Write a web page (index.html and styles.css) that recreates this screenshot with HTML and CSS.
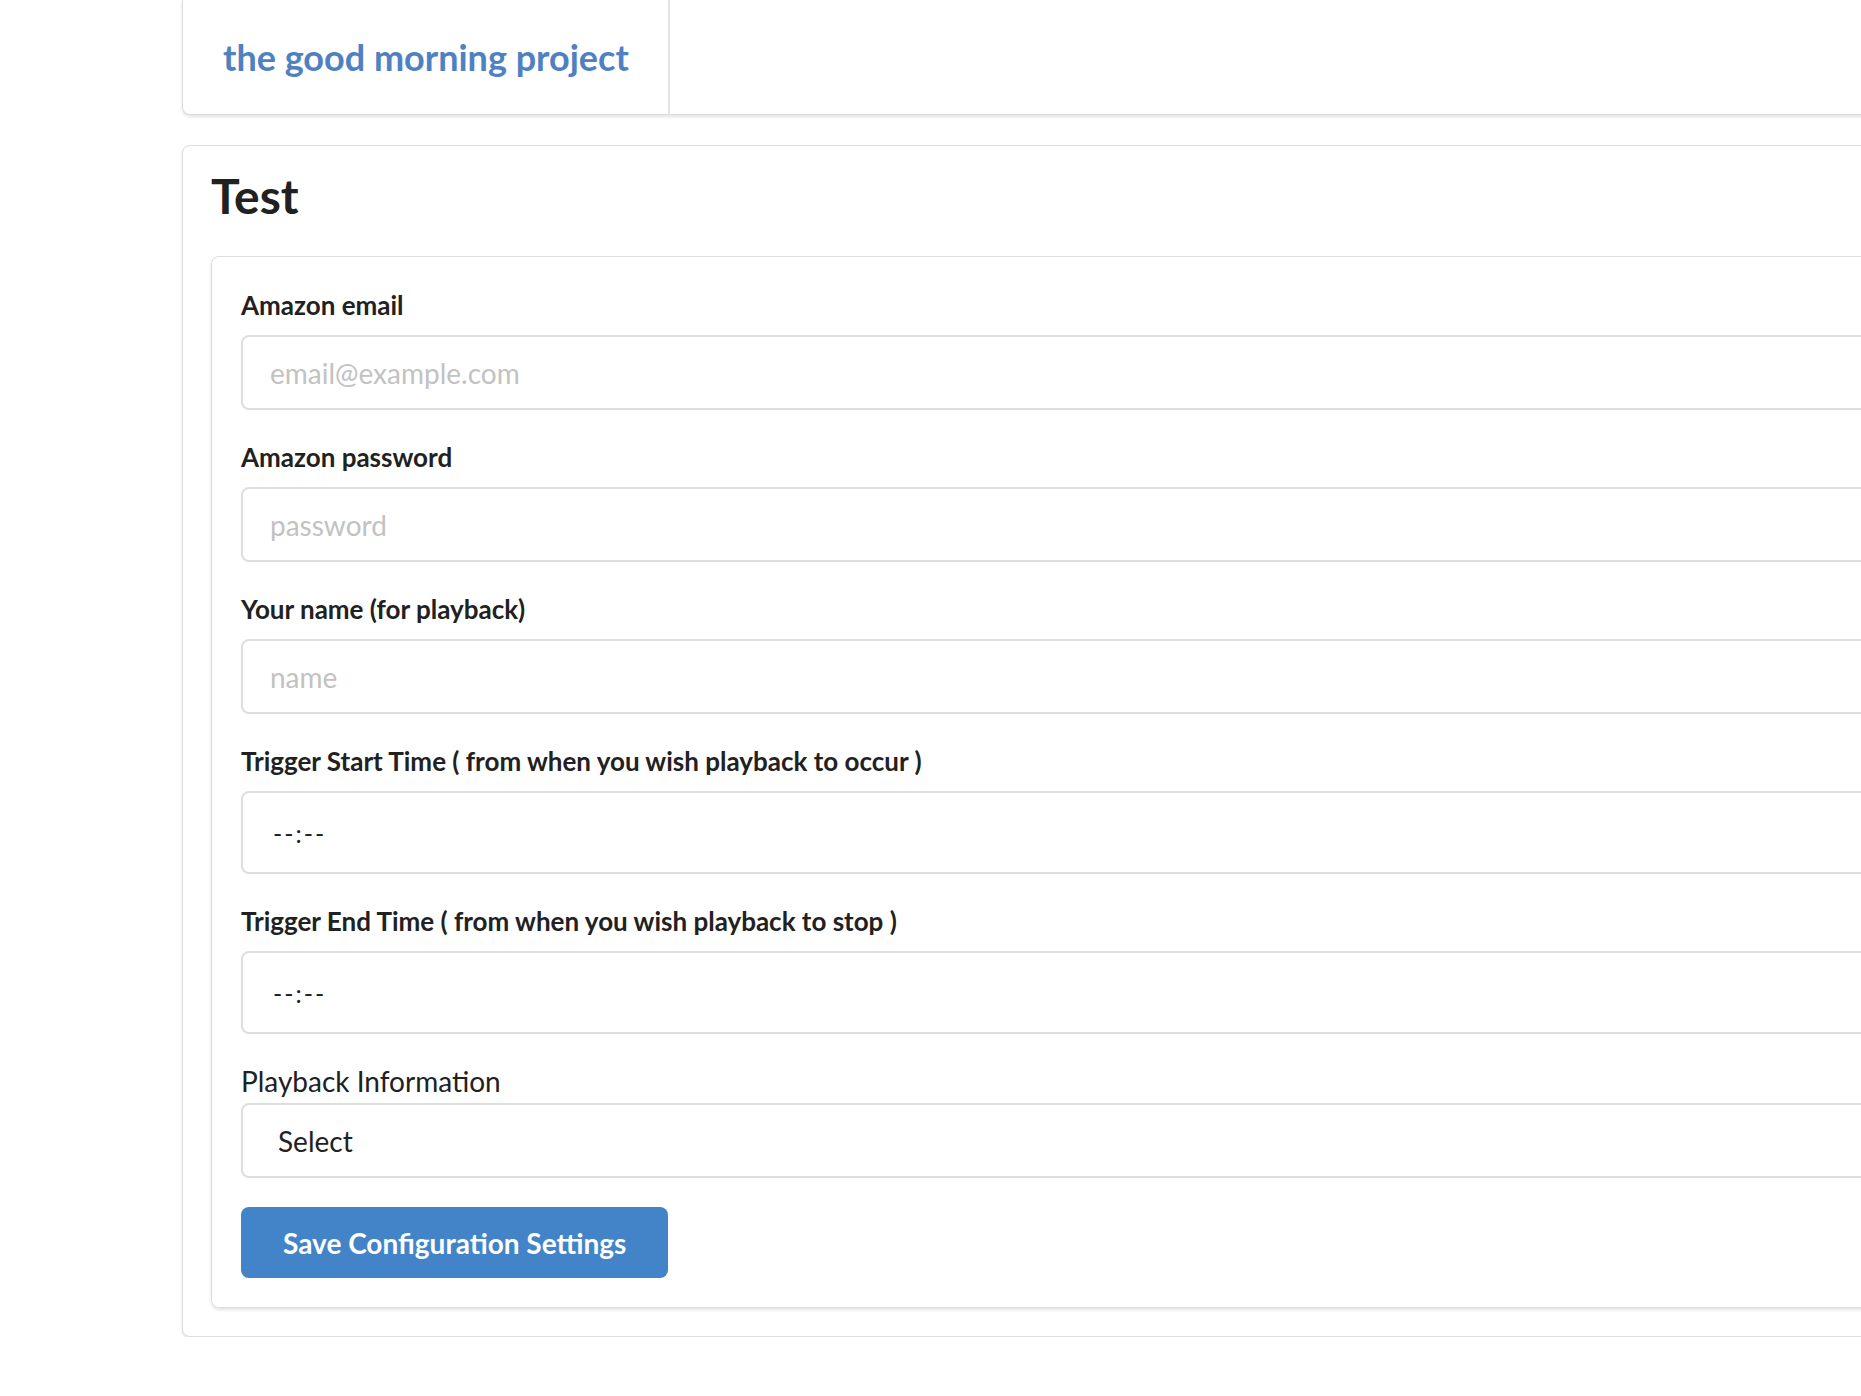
FILE: index.html
```html
<!DOCTYPE html>
<html lang="en">
<head>
<meta charset="utf-8">
<title>the good morning project</title>
<link rel="stylesheet" href="styles.css">
</head>
<body>
<div class="page">
  <header class="menu">
    <a class="menu-item brand" href="#">the good morning project</a>
  </header>
  <main class="card">
    <h1 class="title">Test</h1>
    <form class="segment">
      <div class="field">
        <label class="label">Amazon email</label>
        <input class="input" type="text" placeholder="email@example.com">
      </div>
      <div class="field">
        <label class="label">Amazon password</label>
        <input class="input" type="password" placeholder="password">
      </div>
      <div class="field">
        <label class="label">Your name (for playback)</label>
        <input class="input" type="text" placeholder="name">
      </div>
      <div class="field">
        <label class="label">Trigger Start Time ( from when you wish playback to occur )</label>
        <input class="input input-time" type="text" value="--:--" readonly>
      </div>
      <div class="field">
        <label class="label">Trigger End Time ( from when you wish playback to stop )</label>
        <input class="input input-time" type="text" value="--:--" readonly>
      </div>
      <div class="field">
        <label class="label label-plain">Playback Information</label>
        <div class="dropdown">Select</div>
      </div>
      <button class="button" type="button">Save Configuration Settings</button>
    </form>
  </main>
</div>
</body>
</html>
```
FILE: styles.css
```css
html, body {
  margin: 0;
  padding: 0;
  background: #ffffff;
  overflow: hidden;
}

body {
  font-family: Lato, "Open Sans", "Liberation Sans", sans-serif;
  color: #212121;
}

.page {
  margin-left: 182px;
  width: 1800px;
}

.menu {
  display: flex;
  height: 114px;
  border: 1px solid #dddddd;
  border-top: none;
  border-radius: 0 0 8px 8px;
  box-shadow: 0 2px 3px rgba(34, 36, 38, 0.12);
  background: #fff;
}

.menu-item {
  display: flex;
  align-items: center;
  padding: 0 39px 0 40px;
  border-right: 2px solid #e3e3e3;
  text-decoration: none;
}

.brand {
  font-size: 36px;
  font-weight: 700;
  line-height: 1;
  color: #4f81c2;
}

.card {
  margin-top: 30px;
  border: 1px solid #dddddd;
  border-radius: 8px;
  box-shadow: 0 2px 3px rgba(34, 36, 38, 0.12);
  padding: 24px 28px 28px;
  background: #fff;
}

.title {
  margin: 0 0 34px;
  font-size: 48px;
  font-weight: 700;
  line-height: 52px;
  color: #212121;
}

.segment {
  border: 1px solid #dddddd;
  border-radius: 8px;
  box-shadow: 0 2px 3px rgba(34, 36, 38, 0.12);
  padding: 30px 29px 29px;
  margin: 0;
}

.field {
  margin-bottom: 29px;
}

.label {
  display: block;
  font-size: 26px;
  font-weight: 700;
  line-height: 36px;
  margin-bottom: 12px;
  color: #212121;
}

.label-plain {
  font-size: 28px;
  font-weight: 400;
  margin-bottom: 4px;
}

.input,
.dropdown {
  display: block;
  box-sizing: border-box;
  width: 100%;
  height: 75px;
  margin: 0;
  padding: 0 27px;
  border: 2px solid #dedede;
  border-radius: 8px;
  background: #fff;
  font-family: Lato, "Open Sans", "Liberation Sans", sans-serif;
  font-size: 28px;
  color: #212121;
  outline: none;
}

.input::placeholder {
  color: #c2c2c2;
}

.input-time {
  height: 83px;
  padding: 0 30px;
  font-size: 25px;
  letter-spacing: 2px;
}

.dropdown {
  display: flex;
  align-items: center;
  padding: 0 35px;
  font-size: 28px;
}

.button {
  display: inline-flex;
  align-items: center;
  height: 71px;
  padding: 0 42px;
  border: none;
  border-radius: 8px;
  background: #4384c8;
  color: #fff;
  font-family: Lato, "Open Sans", "Liberation Sans", sans-serif;
  font-size: 28px;
  font-weight: 700;
  cursor: pointer;
}
```
